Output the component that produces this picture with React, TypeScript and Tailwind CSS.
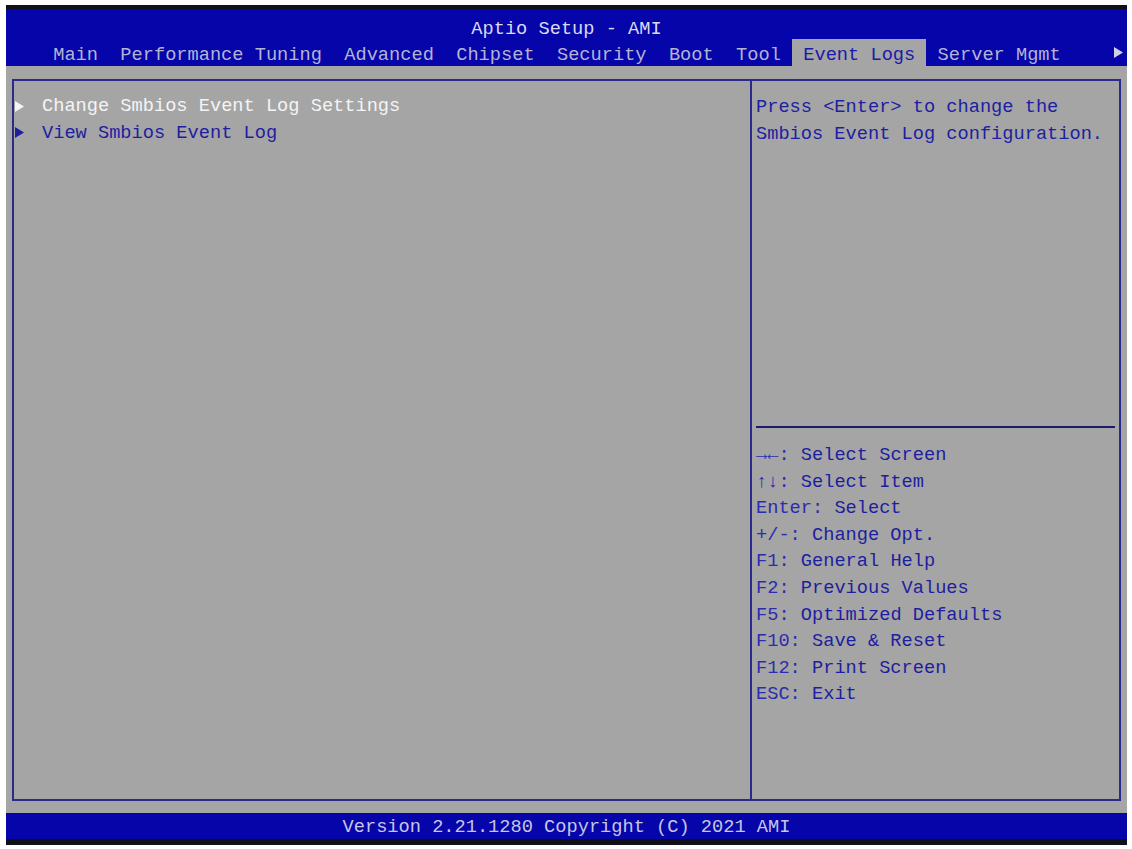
import React from 'react';

const tabs = ['Main', 'Performance Tuning', 'Advanced', 'Chipset', 'Security', 'Boot', 'Tool', 'Event Logs', 'Server Mgmt'];

const keys = [
  { k: '→←', t: 'Select Screen' },
  { k: '↑↓', t: 'Select Item' },
  { k: 'Enter', t: 'Select' },
  { k: '+/-', t: 'Change Opt.' },
  { k: 'F1', t: 'General Help' },
  { k: 'F2', t: 'Previous Values' },
  { k: 'F5', t: 'Optimized Defaults' },
  { k: 'F10', t: 'Save & Reset' },
  { k: 'F12', t: 'Print Screen' },
  { k: 'ESC', t: 'Exit' },
];

function Arrow({ color }: { color: string }) {
  return (
    <svg width="9" height="11" viewBox="0 0 9 11" className="shrink-0">
      <path d="M0 0 L9 5.5 L0 11 Z" fill={color} />
    </svg>
  );
}

export default function App() {
  return (
    <div
      className="w-[1132px] h-[849px] bg-white pt-[5px] pl-[6px] overflow-hidden text-[18.67px] leading-[26.6px]"
      style={{ fontFamily: '"Liberation Mono", "DejaVu Sans Mono", monospace' }}
    >
      <div className="w-[1121px] h-[840px] flex flex-col bg-[#a5a5a5]">
        {/* top bar */}
        <div className="h-[4px] bg-[#101018]" />
        <div className="h-[57px] bg-[#0505aa] flex flex-col">
          <div className="h-[29px] pt-[7px] text-center text-[#dadaf0] whitespace-pre">Aptio Setup - AMI</div>
          <div className="flex items-end h-[28px] pl-[36px] whitespace-pre">
            {tabs.map((tab) => (
              <span
                key={tab}
                className={
                  tab === 'Event Logs'
                    ? 'px-[11.2px] h-[27px] pt-[5px] leading-[22px] bg-[#a5a5a5] text-[#1a1aa8]'
                    : 'px-[11.2px] h-[27px] pt-[5px] leading-[22px] text-[#b4b4d4]'
                }
              >
                {tab}
              </span>
            ))}
            <div className="ml-auto mr-[4px] mb-[8px]">
              <Arrow color="#d0d0e8" />
            </div>
          </div>
        </div>
        <div className="h-[13px]" />

        {/* main panel */}
        <div className="mx-[6px] h-[722px] border-2 border-[#2a2a8c] flex">
          <div className="w-[738px] border-r-2 border-[#2a2a8c] pt-[12px] pl-[1px]">
            <div className="flex items-center gap-[18px] text-[#f4f4f4] whitespace-pre">
              <Arrow color="#f4f4f4" />
              <span>Change Smbios Event Log Settings</span>
            </div>
            <div className="flex items-center gap-[18px] text-[#1e1ea0] whitespace-pre">
              <Arrow color="#1e1ea0" />
              <span>View Smbios Event Log</span>
            </div>
          </div>
          <div className="flex-1 flex flex-col">
            <div className="h-[345px] pt-[13px] pl-[4px] text-[#1e1ea0] whitespace-pre">
              <div>Press &lt;Enter&gt; to change the</div>
              <div>Smbios Event Log configuration.</div>
            </div>
            <div className="mx-[4px] h-[2px] bg-[#1c1c6c]" />
            <div className="pt-[14px] pl-[4px] whitespace-pre">
              {keys.map((item) => (
                <div key={item.k} className="text-[#1e1ea0]">
                  <span className="text-[#2c2cb0]">{item.k}:</span> {item.t}
                </div>
              ))}
            </div>
          </div>
        </div>
        <div className="h-[12px]" />

        {/* footer */}
        <div className="h-[26px] pt-[1px] bg-[#0505aa] text-center text-[#c6c6e4] whitespace-pre">
          Version 2.21.1280 Copyright (C) 2021 AMI
        </div>
        <div className="h-[6px] bg-[#101018]" />
      </div>
    </div>
  );
}
